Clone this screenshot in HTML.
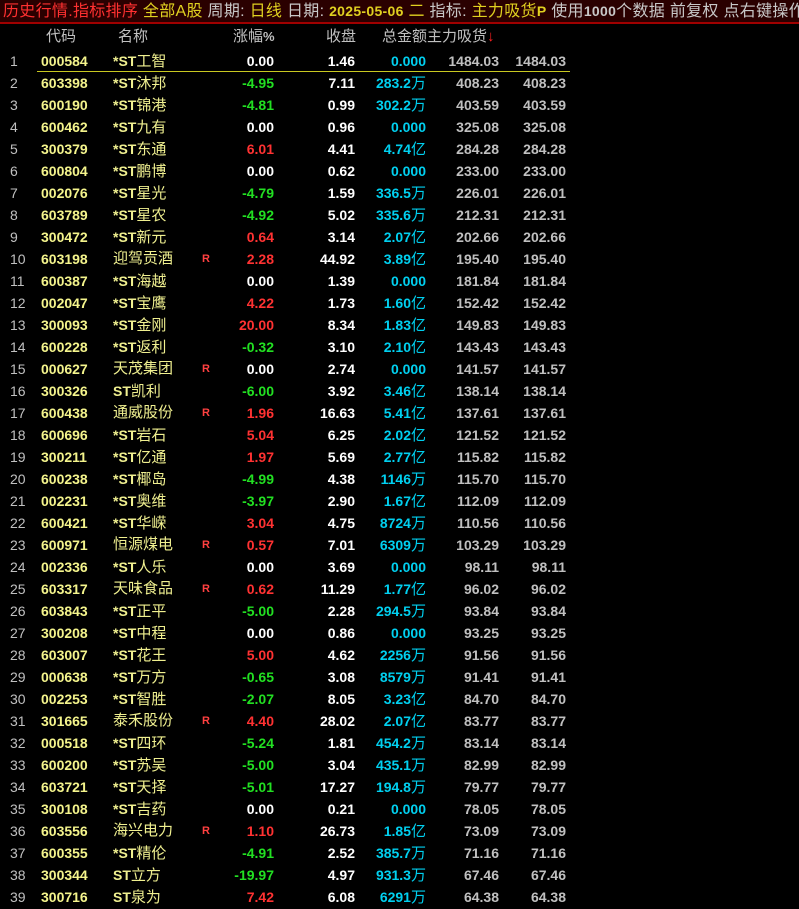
<!DOCTYPE html>
<html><head><meta charset="utf-8"><style>
body{margin:0;width:799px;height:904px;background:#000;overflow:hidden;font-family:"Liberation Sans","Noto Sans CJK SC",sans-serif;position:relative}
.top{position:absolute;left:0;top:0;width:799px;height:22px;background:#2a0000;border-bottom:2px solid #a00000;font-size:16px;line-height:22px;white-space:nowrap;color:#c8c8c8;letter-spacing:0.3px}
.top b{font-weight:bold;font-size:14px}
.hd{position:absolute;top:27px;font-size:15px;color:#c0c0c0;white-space:nowrap;line-height:20px}
.r{position:absolute;left:0;width:799px;height:22px;line-height:22px;font-size:14px;font-weight:bold;white-space:nowrap}
.r span{position:absolute}
.i{left:10px;color:#c0c0c0;font-weight:normal}
.c{left:41px;color:#f4f48c}
.n{left:113px;color:#f0f090;font-size:15px;font-weight:normal}
.n i{font-style:normal;font-size:14px;font-weight:bold}
.R{left:202px;color:#ff4040;font-size:11px}
.z{right:525px}
.s{right:444px;color:#fff}
.t{right:373px;color:#00d0f0}
.t u{text-decoration:none;font-size:15px;font-weight:normal}
.a{right:300px;color:#c0c0c0}
.b{right:233px;color:#c0c0c0}
.g{color:#22e022}.rd{color:#ff3232}.w{color:#fff}
.line{position:absolute;left:37px;top:71px;width:533px;height:1px;background:#c8c820}
</style></head><body>
<div class="top"><span style="color:#ff3030;margin-left:3px">历史行情.指标排序</span> <span style="color:#e0d020">全部A股</span> 周期: <span style="color:#e0d020">日线</span> 日期: <b style="color:#e0d020">2025-05-06</b> <span style="color:#e0d020">二</span> 指标: <span style="color:#e0d020">主力吸货<b>P</b></span> 使用<b>1000</b>个数据 前复权 点右键操作</div>
<div class="hd" style="left:46px">代码</div>
<div class="hd" style="left:118px">名称</div>
<div class="hd" style="left:233px">涨幅<b style="font-size:13px">%</b></div>
<div class="hd" style="left:326px">收盘</div>
<div class="hd" style="left:382px">总金额主力吸货<span style="color:#ff2020">↓</span></div>
<div class="line"></div>
<div id="rows"></div>
<script>
var d=[
["000584","*ST工智","","0.00","1.46","0.000","1484.03"],
["603398","*ST沐邦","","-4.95","7.11","283.2万","408.23"],
["600190","*ST锦港","","-4.81","0.99","302.2万","403.59"],
["600462","*ST九有","","0.00","0.96","0.000","325.08"],
["300379","*ST东通","","6.01","4.41","4.74亿","284.28"],
["600804","*ST鹏博","","0.00","0.62","0.000","233.00"],
["002076","*ST星光","","-4.79","1.59","336.5万","226.01"],
["603789","*ST星农","","-4.92","5.02","335.6万","212.31"],
["300472","*ST新元","","0.64","3.14","2.07亿","202.66"],
["603198","迎驾贡酒","R","2.28","44.92","3.89亿","195.40"],
["600387","*ST海越","","0.00","1.39","0.000","181.84"],
["002047","*ST宝鹰","","4.22","1.73","1.60亿","152.42"],
["300093","*ST金刚","","20.00","8.34","1.83亿","149.83"],
["600228","*ST返利","","-0.32","3.10","2.10亿","143.43"],
["000627","天茂集团","R","0.00","2.74","0.000","141.57"],
["300326","ST凯利","","-6.00","3.92","3.46亿","138.14"],
["600438","通威股份","R","1.96","16.63","5.41亿","137.61"],
["600696","*ST岩石","","5.04","6.25","2.02亿","121.52"],
["300211","*ST亿通","","1.97","5.69","2.77亿","115.82"],
["600238","*ST椰岛","","-4.99","4.38","1146万","115.70"],
["002231","*ST奥维","","-3.97","2.90","1.67亿","112.09"],
["600421","*ST华嵘","","3.04","4.75","8724万","110.56"],
["600971","恒源煤电","R","0.57","7.01","6309万","103.29"],
["002336","*ST人乐","","0.00","3.69","0.000","98.11"],
["603317","天味食品","R","0.62","11.29","1.77亿","96.02"],
["603843","*ST正平","","-5.00","2.28","294.5万","93.84"],
["300208","*ST中程","","0.00","0.86","0.000","93.25"],
["603007","*ST花王","","5.00","4.62","2256万","91.56"],
["000638","*ST万方","","-0.65","3.08","8579万","91.41"],
["002253","*ST智胜","","-2.07","8.05","3.23亿","84.70"],
["301665","泰禾股份","R","4.40","28.02","2.07亿","83.77"],
["000518","*ST四环","","-5.24","1.81","454.2万","83.14"],
["600200","*ST苏吴","","-5.00","3.04","435.1万","82.99"],
["603721","*ST天择","","-5.01","17.27","194.8万","79.77"],
["300108","*ST吉药","","0.00","0.21","0.000","78.05"],
["603556","海兴电力","R","1.10","26.73","1.85亿","73.09"],
["600355","*ST精伦","","-4.91","2.52","385.7万","71.16"],
["300344","ST立方","","-19.97","4.97","931.3万","67.46"],
["300716","ST泉为","","7.42","6.08","6291万","64.38"]];
var h="";
d.forEach(function(r,k){
var zc=r[3].charAt(0)=="-"?"g":(parseFloat(r[3])>0?"rd":"w");
var nm=r[1].replace(/^(\*?ST)/,"<i>$1</i>");
var t=r[5].replace(/([万亿])/,"<u>$1</u>");
h+='<div class="r" style="top:'+(50+k*22)+'px"><span class="i">'+(k+1)+'</span><span class="c">'+r[0]+'</span><span class="n">'+nm+'</span>'+(r[2]?'<span class="R">R</span>':'')+'<span class="z '+zc+'">'+r[3]+'</span><span class="s">'+r[4]+'</span><span class="t">'+t+'</span><span class="a">'+r[6]+'</span><span class="b">'+r[6]+'</span></div>';
});
document.getElementById("rows").innerHTML=h;
</script>
</body></html>
